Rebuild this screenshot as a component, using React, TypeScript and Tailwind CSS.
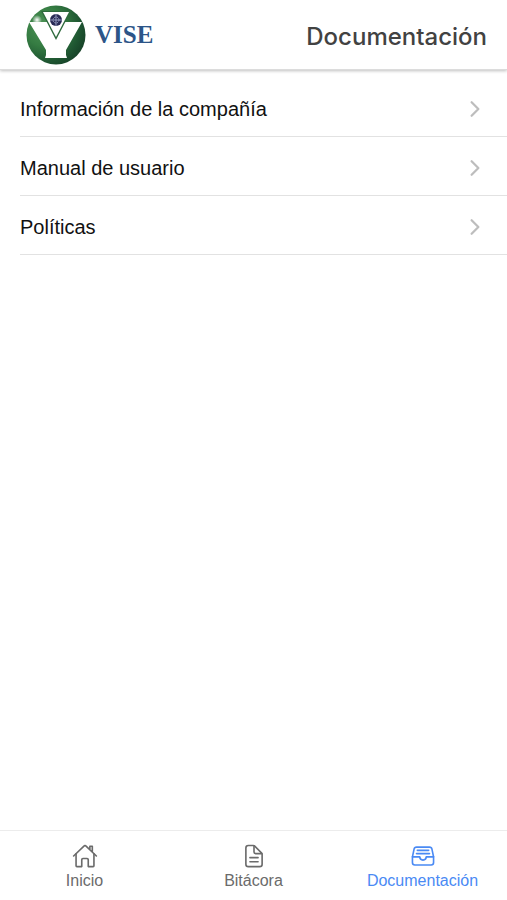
import {
  IoChevronForward,
  IoDocumentTextOutline,
  IoFileTrayFullOutline,
  IoHomeOutline,
} from 'react-icons/io5'

const documents = [
  { href: '#compania', label: 'Información de la compañía' },
  { href: '#manual', label: 'Manual de usuario' },
  { href: '#politicas', label: 'Políticas' },
]

const tabs = [
  { href: '#inicio', label: 'Inicio', Icon: IoHomeOutline, active: false },
  { href: '#bitacora', label: 'Bitácora', Icon: IoDocumentTextOutline, active: false },
  { href: '#documentacion', label: 'Documentación', Icon: IoFileTrayFullOutline, active: true },
]

export default function App() {
  return (
    <div className="flex min-h-screen flex-col bg-white font-['Liberation_Sans',Arial,sans-serif]">
      <header className="flex h-[70px] items-center justify-between border-b border-[#dcdcdc] pr-5 pl-[26px] shadow-[0_1px_3px_rgba(0,0,0,0.25)]">
        <Logo />
        <h1 className="pt-1 font-[Inter,sans-serif] text-[24px] leading-7 font-medium text-[#424242]">Documentación</h1>
      </header>

      <main className="flex-1 pt-2">
        <ul className="pl-5">
          {documents.map(({ href, label }) => (
            <li key={href} className="border-b border-[#e2e2e2]">
              <a href={href} className="flex h-[58px] items-center justify-between pt-[3px] pr-5 text-[20px] leading-6 text-[#111]">
                {label}
                <IoChevronForward className="h-6 w-6 text-[#bdbdbd]" aria-hidden="true" />
              </a>
            </li>
          ))}
        </ul>
      </main>

      <nav className="grid h-[70px] grid-cols-3 border-t border-[#ececec]">
        {tabs.map(({ href, label, Icon, active }) => (
          <a
            key={href}
            href={href}
            aria-current={active ? 'page' : undefined}
            className={`flex flex-col items-center gap-[2px] pt-3 text-[16px] leading-5 ${active ? 'text-[#4a8af4]' : 'text-[#6b6b6b]'}`}
          >
            <Icon className="h-[26px] w-[26px]" aria-hidden="true" />
            {label}
          </a>
        ))}
      </nav>
    </div>
  )
}

function Logo() {
  return (
    <div className="flex items-center gap-[9px]">
      <svg className="h-[60px] w-[60px]" viewBox="0 0 60 60" aria-hidden="true">
        <defs>
          <radialGradient id="sphere" cx="0.3" cy="0.35" r="0.85">
            <stop offset="0" stopColor="#4f9458" />
            <stop offset="0.4" stopColor="#357c42" />
            <stop offset="0.7" stopColor="#1f5732" />
            <stop offset="1" stopColor="#123522" />
          </radialGradient>
          <radialGradient id="shine">
            <stop offset="0" stopColor="#fff" />
            <stop offset="1" stopColor="#fff" stopOpacity="0" />
          </radialGradient>
        </defs>
        <circle cx="30" cy="30" r="29.5" fill="url(#sphere)" />
        <circle cx="11" cy="15" r="5" fill="url(#shine)" />
        {/* Outer V */}
        <path d="M3 17H56L40 45V50L41 53H19L20 50V45Z" fill="#fff" />
        {/* Green gap around the inner triangle */}
        <path d="M15 6H45L30 35Z" fill="#2d6a3c" />
        {/* Inner triangle with its emblem */}
        <path d="M17 7H43L30 32Z" fill="#fff" />
        <circle cx="30" cy="15" r="6" fill="#292b55" />
        <path d="M30 9V21M24 15H36" stroke="#a9b0d3" strokeWidth="0.8" />
        <circle cx="30" cy="15" r="3" fill="none" stroke="#a9b0d3" strokeWidth="1" strokeDasharray="1.4 1" />
      </svg>
      <span className="font-['Liberation_Serif',serif] text-[25px] leading-7 font-bold text-[#2c5588]">VISE</span>
    </div>
  )
}
